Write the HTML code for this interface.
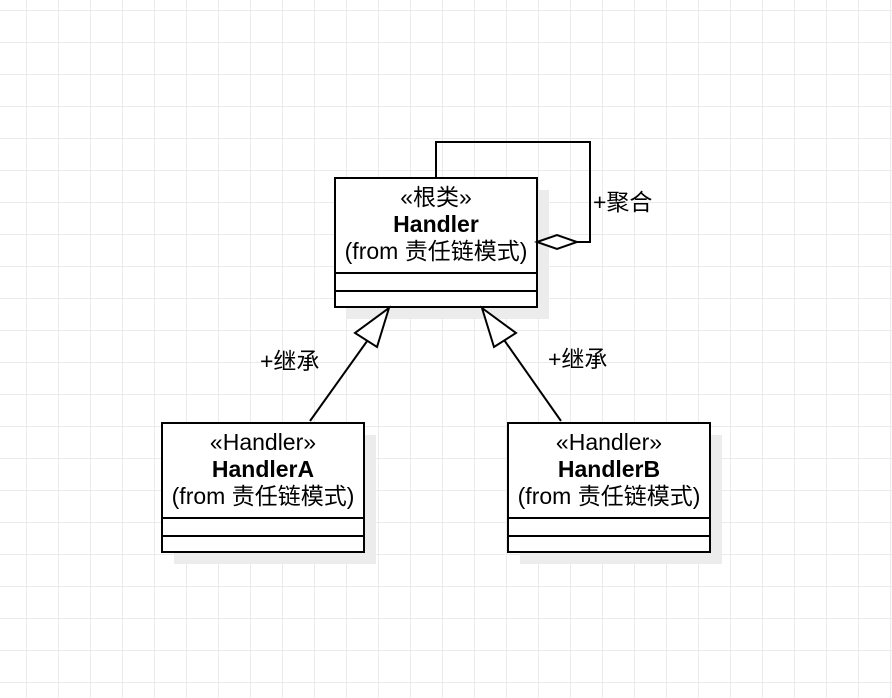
<!DOCTYPE html>
<html><head><meta charset="utf-8"><style>
body{margin:0;width:892px;height:698px;overflow:hidden;background:#fff;
background-image:linear-gradient(#ebebeb 1px,transparent 1px),linear-gradient(90deg,#ebebeb 1px,transparent 1px);
background-size:32px 32px;background-position:26px 10px;}
svg{position:absolute;left:0;top:0}
text{font-family:"Liberation Sans","Noto Sans CJK SC",sans-serif;font-size:23px;fill:#000}
</style></head><body>
<svg width="892" height="698">
<g fill="#ececec">
<rect x="347" y="190" width="202" height="129"/>
<rect x="174" y="435" width="202" height="129"/>
<rect x="520" y="435" width="202" height="129"/>
</g>
<g fill="#fff" stroke="#000" stroke-width="2">
<rect x="335" y="178" width="202" height="129"/>
<rect x="162" y="423" width="202" height="129"/>
<rect x="508" y="423" width="202" height="129"/>
</g>
<g stroke="#000" stroke-width="2" fill="none">
<path d="M335 273H537M335 291H537M162 518H364M162 536H364M508 518H710M508 536H710"/>
<path d="M436 178V142H590V242H577"/>
<path d="M537 242L557 235L577 242L557 249Z" fill="#fff"/>
<path d="M310 421L370 337M561 421L502 337"/>
<path d="M389 308L377 347L355 333Z" fill="#fff"/>
<path d="M482 308L516 333L494 347Z" fill="#fff"/>
</g>
<g text-anchor="middle">
<text x="436" y="205">«根类»</text>
<text x="436" y="232" font-weight="bold">Handler</text>
<text x="436" y="259">(from 责任链模式)</text>
<text x="263" y="450">«Handler»</text>
<text x="263" y="477" font-weight="bold">HandlerA</text>
<text x="263" y="504">(from 责任链模式)</text>
<text x="609" y="450">«Handler»</text>
<text x="609" y="477" font-weight="bold">HandlerB</text>
<text x="609" y="504">(from 责任链模式)</text>
</g>
<text x="593" y="210">+聚合</text>
<text x="260" y="369">+继承</text>
<text x="548" y="367">+继承</text>
</svg>
</body></html>
